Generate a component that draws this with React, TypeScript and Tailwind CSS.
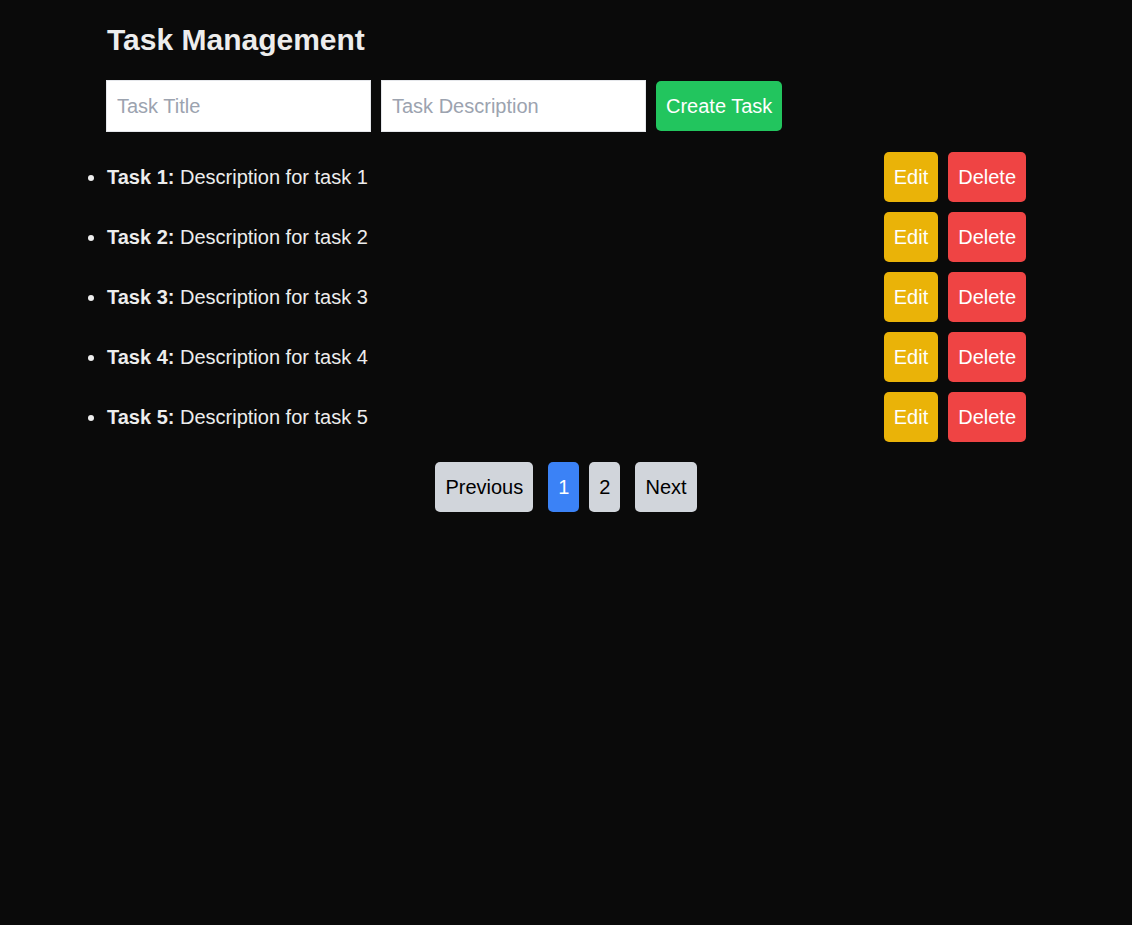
import React, { useState } from "react";

interface ITask {
  id: number;
  title: string;
  description: string;
}

const allTasks: ITask[] = Array.from({ length: 10 }, (_, i) => ({
  id: i + 1,
  title: `Task ${i + 1}`,
  description: `Description for task ${i + 1}`,
}));

const App: React.FC = () => {
  const [tasks] = useState<ITask[]>(allTasks);
  const [page, setPage] = useState<number>(1);
  const [title, setTitle] = useState<string>("");
  const [description, setDescription] = useState<string>("");

  const perPage = 5;
  const pages = Math.ceil(tasks.length / perPage);
  const visible = tasks.slice((page - 1) * perPage, page * perPage);

  return (
    <div className="min-h-screen bg-[#0a0a0a] text-[#ededed] font-['Liberation_Sans',Arial,Helvetica,sans-serif]">
      <div className="w-[960px] mx-auto p-5">
        <h1 className="text-[30px] leading-[40px] font-bold mb-5 pl-px">Task Management</h1>

        <form
          className="flex items-center mb-5"
          onSubmit={(e) => e.preventDefault()}
        >
          <input
            type="text"
            placeholder="Task Title"
            value={title}
            onChange={(e) => setTitle(e.target.value)}
            className="w-[265px] h-[52px] mr-[10px] px-[10px] bg-white border border-[#e5e7eb] text-[20px] text-black placeholder-[#9ca3af] outline-none"
          />
          <input
            type="text"
            placeholder="Task Description"
            value={description}
            onChange={(e) => setDescription(e.target.value)}
            className="w-[265px] h-[52px] mr-[10px] px-[10px] bg-white border border-[#e5e7eb] text-[20px] text-black placeholder-[#9ca3af] outline-none"
          />
          <button
            type="submit"
            className="h-[50px] px-[10px] bg-[#22c55e] text-white text-[20px] leading-[30px] rounded-[5px]"
          >
            Create Task
          </button>
        </form>

        <ul className="list-disc w-[920px] pl-px">
          {visible.map((task) => (
            <li key={task.id} className="mb-[10px] text-[20px] leading-[30px]">
              <div className="flex items-center justify-between">
                <span>
                  <strong>{task.title}:</strong> {task.description}
                </span>
                <div className="flex">
                  <button className="h-[50px] px-[10px] mr-[10px] bg-[#eab308] text-white rounded-[5px]">
                    Edit
                  </button>
                  <button className="h-[50px] px-[10px] bg-[#ef4444] text-white rounded-[5px]">
                    Delete
                  </button>
                </div>
              </div>
            </li>
          ))}
        </ul>

        <div className="flex justify-center mt-5 text-[20px] leading-[30px]">
          <button
            onClick={() => setPage(Math.max(1, page - 1))}
            className="h-[50px] px-[10px] mr-[10px] bg-[#d1d5db] text-black rounded-[5px]"
          >
            Previous
          </button>
          {Array.from({ length: pages }, (_, i) => i + 1).map((n) => (
            <button
              key={n}
              onClick={() => setPage(n)}
              className={
                n === page
                  ? "h-[50px] px-[10px] mx-[5px] bg-[#3b82f6] text-white rounded-[5px]"
                  : "h-[50px] px-[10px] mx-[5px] bg-[#d1d5db] text-black rounded-[5px]"
              }
            >
              {n}
            </button>
          ))}
          <button
            onClick={() => setPage(Math.min(pages, page + 1))}
            className="h-[50px] px-[10px] ml-[10px] bg-[#d1d5db] text-black rounded-[5px]"
          >
            Next
          </button>
        </div>
      </div>
    </div>
  );
};

export default App;
